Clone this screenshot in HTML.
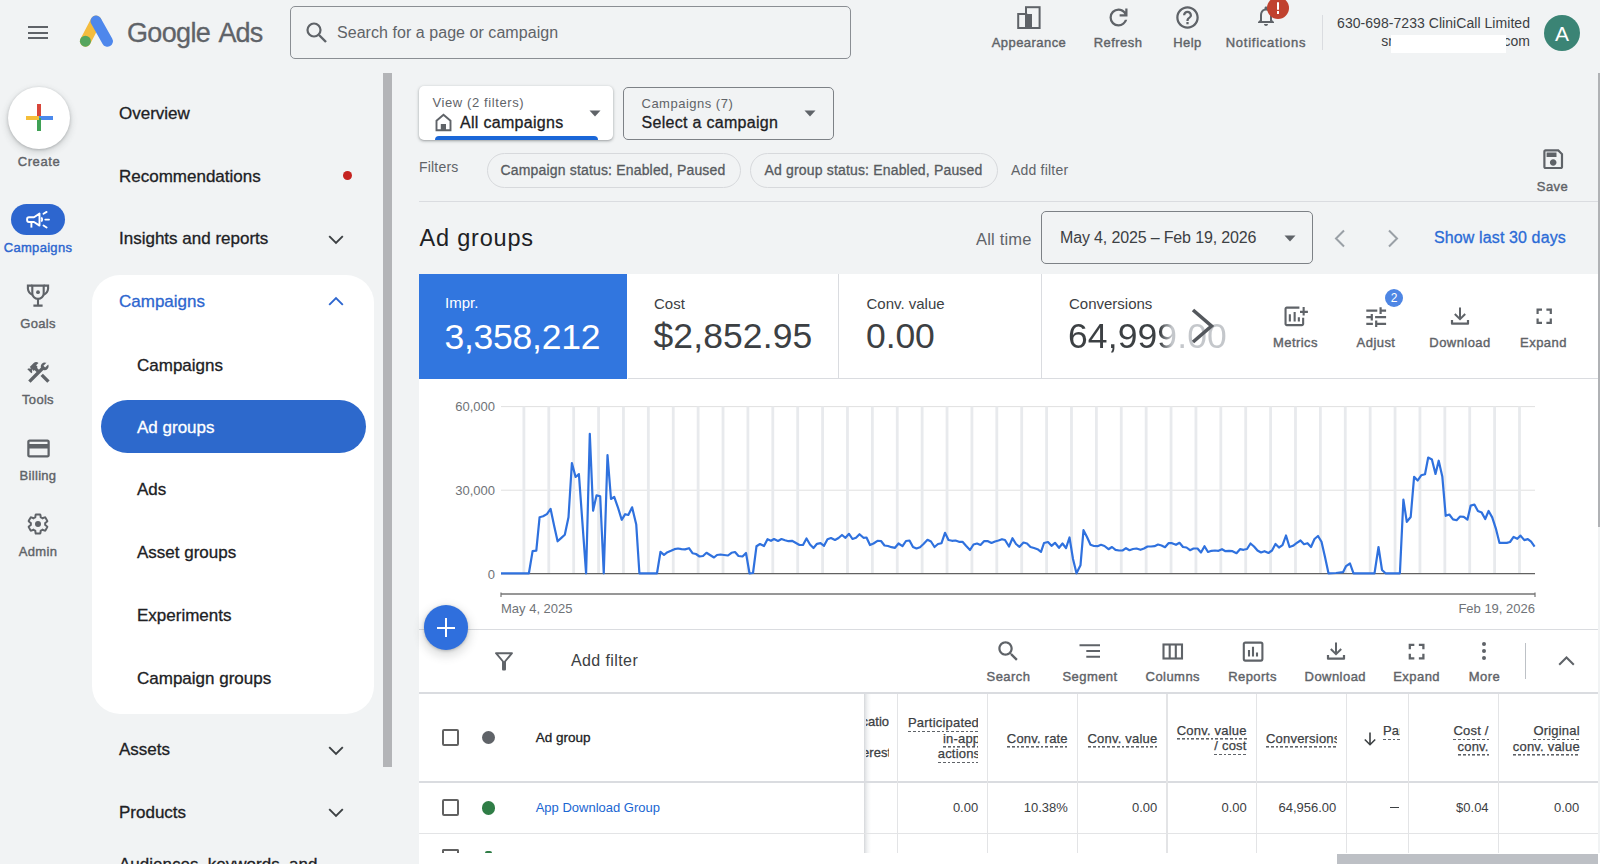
<!DOCTYPE html>
<html><head><meta charset="utf-8">
<style>
*{box-sizing:border-box;margin:0;padding:0}
html,body{width:1600px;height:864px;overflow:hidden;background:#f1f3f4;font-family:"Liberation Sans",sans-serif;color:#202124}
.a{position:absolute}
.t{position:absolute;white-space:nowrap;line-height:1}
svg{position:absolute;overflow:visible}
.lbl{position:absolute;white-space:nowrap;line-height:1;font-size:13px;color:#5f6368;text-align:center;transform:translateX(-50%);-webkit-text-stroke:0.4px #5f6368;letter-spacing:0.45px}
.med{-webkit-text-stroke:0.3px currentColor}
.nav{position:absolute;white-space:nowrap;line-height:1;font-size:16px;color:#202124;-webkit-text-stroke:0.3px currentColor;margin-top:0.8px}
.chev{position:absolute}
.ul{-webkit-text-stroke:0.25px currentColor;letter-spacing:0.2px;padding-bottom:3.2px;background:repeating-linear-gradient(to right,#5f6368 0 2.8px,transparent 2.8px 4.8px) left bottom/100% 1.6px no-repeat}
</style></head><body>

<!-- TOP BAR -->
<div class="a" style="left:28px;top:26px;width:20px;height:2px;background:#5f6368"></div>
<div class="a" style="left:28px;top:31.5px;width:20px;height:2px;background:#5f6368"></div>
<div class="a" style="left:28px;top:37px;width:20px;height:2px;background:#5f6368"></div>
<svg style="left:0;top:0" width="1" height="1">
  <line x1="96" y1="21" x2="85.4" y2="41.2" stroke="#f4bc3e" stroke-width="11" stroke-linecap="round"/>
  <line x1="96" y1="21" x2="107.4" y2="41.2" stroke="#4e87ec" stroke-width="11" stroke-linecap="round"/>
  <circle cx="85.4" cy="41.2" r="5.5" fill="#55a55e"/>
</svg>
<div class="t" style="left:127px;top:20px;font-size:27px;letter-spacing:-0.65px;color:#5f6368;-webkit-text-stroke:0.3px #5f6368">Google</div><div class="t" style="left:218.5px;top:20px;font-size:27px;letter-spacing:-0.9px;color:#5f6368;-webkit-text-stroke:0.3px #5f6368">Ads</div>

<div class="a" style="left:289.5px;top:5.6px;width:561px;height:53.4px;border:1.3px solid #8a8e93;border-radius:5px"></div>
<svg style="left:0;top:0" width="1" height="1">
  <circle cx="314" cy="30" r="6.5" fill="none" stroke="#5f6368" stroke-width="2.2"/>
  <line x1="319" y1="35" x2="326" y2="42" stroke="#5f6368" stroke-width="2.4"/>
</svg>
<div class="t" style="left:337px;top:25px;font-size:16px;letter-spacing:0.05px;color:#5f6368">Search for a page or campaign</div>


<!-- top right -->
<svg style="left:1017px;top:5.7px" width="24" height="24" viewBox="0 0 24 24">
  <rect x="1.2" y="8" width="8" height="14" fill="none" stroke="#5f6368" stroke-width="2"/>
  <rect x="9" y="1.2" width="13.6" height="20.8" fill="none" stroke="#5f6368" stroke-width="2"/>
  <rect x="8" y="8" width="7" height="14" fill="#5f6368"/>
</svg>
<div class="lbl" style="left:1029px;top:35.5px">Appearance</div>
<svg style="left:1104.5px;top:3.5px" width="27" height="27" viewBox="0 -960 960 960"><path fill="#5f6368" d="M480-160q-134 0-227-93t-93-227q0-134 93-227t227-93q69 0 132 28.5T720-690v-110h80v280H520v-80h168q-32-56-87.5-88T480-720q-100 0-170 70t-70 170q0 100 70 170t170 70q77 0 139-44t87-116h84q-28 106-114 173t-196 67Z"/></svg>
<div class="lbl" style="left:1118px;top:35.5px">Refresh</div>
<svg style="left:1174px;top:4px" width="27" height="27" viewBox="0 0 24 24"><path fill="#5f6368" d="M11 18h2v-2h-2v2zm1-16C6.48 2 2 6.48 2 12s4.48 10 10 10 10-4.48 10-10S17.52 2 12 2zm0 18c-4.41 0-8-3.59-8-8s3.59-8 8-8 8 3.59 8 8-3.59 8-8 8zm0-14c-2.21 0-4 1.79-4 4h2c0-1.1.9-2 2-2s2 .9 2 2c0 2-3 1.75-3 5h2c0-2.25 3-2.5 3-5 0-2.21-1.79-4-4-4z"/></svg>
<div class="lbl" style="left:1187.5px;top:35.5px">Help</div>
<svg style="left:1254px;top:4px" width="24" height="24" viewBox="0 0 24 24"><path fill="#5f6368" d="M12 22c1.1 0 2-.9 2-2h-4c0 1.1.9 2 2 2zm6-6v-5c0-3.07-1.64-5.64-4.5-6.32V4c0-.83-.67-1.5-1.5-1.5s-1.5.67-1.5 1.5v.68C7.630 5.36 6 7.92 6 11v5l-2 2v1h16v-1l-2-2zm-2 1H8v-6c0-2.48 1.51-4.5 4-4.5s4 2.02 4 4.5v6z"/></svg>
<div class="a" style="left:1267px;top:-3px;width:22px;height:22px;border-radius:50%;background:#c0422f"></div>
<div class="a" style="left:1276.5px;top:2px;width:2.6px;height:7.5px;background:#fff;border-radius:1px"></div>
<div class="a" style="left:1276.5px;top:11px;width:2.6px;height:2.6px;background:#fff"></div>
<div class="lbl" style="left:1266px;top:35.5px;letter-spacing:0.75px">Notifications</div>
<div class="a" style="left:1322px;top:15px;width:1px;height:35px;background:#dadce0"></div>
<div class="t" style="right:70px;top:16.2px;font-size:14px;letter-spacing:0.05px;color:#3c4043">630-698-7233 CliniCall Limited</div>
<div class="t" style="left:1381.2px;top:34px;font-size:14px;color:#3c4043">sm</div><div class="t" style="right:70px;top:34px;font-size:14px;color:#3c4043">.com</div>
<div class="a" style="left:1391px;top:35px;width:115px;height:17.5px;background:#fff"></div>
<div class="a" style="left:1544px;top:15px;width:36px;height:36px;border-radius:50%;background:#3b8475"></div>
<div class="t" style="left:1544px;top:23px;width:36px;text-align:center;font-size:21px;color:#fff">A</div>

<!-- LEFT RAIL -->
<div class="a" style="left:8px;top:86.5px;width:62px;height:62px;border-radius:50%;background:#fff;box-shadow:0 1px 3px rgba(60,64,67,.3),0 3px 6px 2px rgba(60,64,67,.12)"></div>
<div class="a" style="left:37px;top:104px;width:4px;height:14px;background:#d8463a"></div>
<div class="a" style="left:39px;top:116px;width:14px;height:4px;background:#4b89ec"></div>
<div class="a" style="left:37px;top:118px;width:4px;height:13px;background:#3fa155"></div>
<div class="a" style="left:26px;top:116px;width:13px;height:4px;background:#f5be39"></div>
<div class="lbl" style="left:39px;top:155px;font-size:13px;letter-spacing:0.6px">Create</div>

<div class="a" style="left:11px;top:204px;width:54px;height:31px;border-radius:16px;background:#2d66cf"></div>
<svg style="left:0;top:0" width="1" height="1"><g fill="none" stroke="#fff" stroke-width="1.9" stroke-linejoin="round">
<path d="M29 217.2H34L39.5 213.6V225.6L34 222H29A1.9 1.9 0 0 1 27.1 220.1V219.1A1.9 1.9 0 0 1 29 217.2Z"/>
<path d="M31.4 222.3V227.6"/>
<path d="M41.2 217.6A2.6 2.6 0 0 1 41.2 221.6" />
<path d="M43.5 213.8L46.6 211.9M45.3 219.6H49M43.5 225.5L46.6 227.5" stroke-linecap="round"/>
</g></svg>
<div class="lbl" style="left:38px;top:241px;font-size:13px;letter-spacing:0.3px;color:#2d66cf;-webkit-text-stroke:0.4px #2d66cf">Campaigns</div>

<svg style="left:0;top:0" width="1" height="1"><g fill="none" stroke="#5f6368" stroke-width="2.1">
<path d="M32.3 285.6H43.7V293.2A5.7 5.7 0 0 1 32.3 293.2Z"/>
<path d="M32.3 285.6H27.9V288.6Q28.3 293 32.5 294.8M43.7 285.6H48.1V288.6Q47.7 293 43.5 294.8"/>
<path d="M38 299V305.6M33.4 305.6H42.6"/>
</g><circle cx="38" cy="292.2" r="1.9" fill="#5f6368"/></svg>
<div class="lbl" style="left:38px;top:317px;font-size:13px;letter-spacing:0.3px">Goals</div>

<svg style="left:24.5px;top:358.5px" width="27" height="27" viewBox="0 0 24 24"><path fill="#5f6368" d="M13.783 15.172l2.121-2.121 5.996 5.996-2.121 2.121zM17.5 10c1.93 0 3.5-1.57 3.5-3.5 0-.58-.16-1.12-.41-1.6l-2.7 2.7-1.49-1.49 2.7-2.7c-.48-.25-1.02-.41-1.6-.41C15.57 3 14 4.57 14 6.5c0 .41.08.8.21 1.16l-1.85 1.85-1.78-1.78.71-.71-1.41-1.41L12 3.49c-1.17-1.17-3.07-1.17-4.24 0L4.22 7.03l1.41 1.41H2.81l-.71.71 3.54 3.54.71-.71V9.15l1.41 1.41.71-.71 1.78 1.78-7.41 7.41 2.12 2.12L16.34 9.79c.36.13.75.21 1.16.21z"/></svg>
<div class="lbl" style="left:38px;top:393px;font-size:13px;letter-spacing:0.3px">Tools</div>

<svg style="left:24.5px;top:435px" width="27" height="27" viewBox="0 0 24 24"><path fill="#5f6368" d="M20 4H4c-1.11 0-1.99.89-1.99 2L2 18c0 1.11.89 2 2 2h16c1.11 0 2-.89 2-2V6c0-1.11-.89-2-2-2zm0 14H4v-6h16v6zm0-10H4V6h16v2z"/></svg>
<div class="lbl" style="left:38px;top:469px;font-size:13px;letter-spacing:0.3px">Billing</div>

<svg style="left:26px;top:512px" width="24" height="24" viewBox="0 0 24 24"><path fill="none" stroke="#5f6368" stroke-width="2" d="M19.14 12.94c.04-.3.06-.61.06-.94 0-.32-.02-.64-.07-.94l2.03-1.58c.18-.14.23-.41.12-.61l-1.92-3.32c-.12-.22-.37-.29-.59-.22l-2.39.96c-.5-.38-1.03-.7-1.62-.94l-.36-2.54c-.04-.24-.24-.41-.48-.41h-3.84c-.24 0-.43.17-.47.41l-.36 2.54c-.59.24-1.13.57-1.62.94l-2.39-.96c-.22-.08-.47 0-.59.22L2.74 8.87c-.12.21-.08.47.12.61l2.03 1.58c-.05.3-.09.63-.09.94s.02.64.07.94l-2.03 1.58c-.18.14-.23.41-.12.61l1.92 3.32c.12.22.37.29.59.22l2.39-.96c.5.38 1.03.7 1.62.94l.36 2.54c.05.24.24.41.48.41h3.84c.24 0 .44-.17.47-.41l.36-2.54c.59-.24 1.13-.56 1.62-.94l2.39.96c.22.08.47 0 .59-.22l1.92-3.32c.12-.22.07-.47-.12-.61l-2.01-1.58z"/><circle cx="12" cy="12" r="3" fill="#5f6368"/></svg>
<div class="lbl" style="left:38px;top:545px;font-size:13px;letter-spacing:0.3px">Admin</div>


<!-- NAV PANEL -->
<div class="nav" style="left:119px;top:104.1px;font-size:17px">Overview</div>
<div class="nav" style="left:119px;top:167.4px;font-size:17px">Recommendations</div>
<div class="a" style="left:342.5px;top:171px;width:9px;height:9px;border-radius:50%;background:#c5221f"></div>
<div class="nav" style="left:119px;top:229.4px;font-size:17px">Insights and reports</div>
<svg style="left:328px;top:234.5px" width="16" height="10" viewBox="0 0 16 10"><path d="M1.2 1.2 L8 8 L14.8 1.2" fill="none" stroke="#3c4043" stroke-width="1.9"/></svg>
<div class="a" style="left:92px;top:274.5px;width:282px;height:439.5px;border-radius:28px;background:#fff"></div>
<div class="nav" style="left:119px;top:292.6px;font-size:17px;color:#2d66cf">Campaigns</div>
<svg style="left:328px;top:296px" width="16" height="10" viewBox="0 0 16 10"><path d="M1.2 8.8 L8 2 L14.8 8.8" fill="none" stroke="#2d66cf" stroke-width="1.9"/></svg>
<div class="nav" style="left:137px;top:355.8px;font-size:17px">Campaigns</div>
<div class="a" style="left:101px;top:400.3px;width:264.5px;height:53px;border-radius:27px;background:#2d69cc"></div>
<div class="nav" style="left:137px;top:418.0px;font-size:17px;color:#fff">Ad groups</div>
<div class="nav" style="left:137px;top:480.6px;font-size:17px">Ads</div>
<div class="nav" style="left:137px;top:543.4px;font-size:17px">Asset groups</div>
<div class="nav" style="left:137px;top:606.1px;font-size:17px">Experiments</div>
<div class="nav" style="left:137px;top:668.8px;font-size:17px">Campaign groups</div>
<div class="nav" style="left:119px;top:740.5px;font-size:17px">Assets</div>
<svg style="left:328px;top:745.5px" width="16" height="10" viewBox="0 0 16 10"><path d="M1.2 1.2 L8 8 L14.8 1.2" fill="none" stroke="#3c4043" stroke-width="1.9"/></svg>
<div class="nav" style="left:119px;top:803.1px;font-size:17px">Products</div>
<svg style="left:328px;top:808px" width="16" height="10" viewBox="0 0 16 10"><path d="M1.2 1.2 L8 8 L14.8 1.2" fill="none" stroke="#3c4043" stroke-width="1.9"/></svg>
<div class="nav" style="left:119px;top:855.1px;font-size:17px">Audiences, keywords, and</div>
<div class="a" style="left:382.8px;top:73px;width:9px;height:694px;background:#b3b4b7"></div>


<!-- MAIN TOP -->
<div class="a" style="left:419px;top:86.3px;width:194px;height:54px;border-radius:5px;background:#fff;box-shadow:0 1px 2px rgba(60,64,67,.3),0 1px 3px 1px rgba(60,64,67,.15);overflow:hidden">
  <div class="a" style="left:16px;top:49.3px;width:163px;height:6px;border-radius:4px 4px 0 0;background:#1a67d8"></div>
</div>
<div class="t" style="left:432.5px;top:95.7px;font-size:13px;letter-spacing:0.6px;color:#5f6368">View (2 filters)</div>
<svg style="left:434px;top:113px" width="19" height="19" viewBox="0 0 19 19"><path d="M2.5 17.2V7.8L9.5 1.8L16.5 7.8V17.2Z" fill="none" stroke="#5f6368" stroke-width="1.9" stroke-linejoin="miter"/><rect x="6.8" y="11" width="5.2" height="6.2" fill="#5f6368"/></svg>
<div class="t med" style="left:460px;top:115.4px;font-size:16px;letter-spacing:0.3px;color:#202124">All campaigns</div>
<svg style="left:589px;top:110px" width="12" height="7" viewBox="0 0 12 7"><path d="M0.5 0.5H11.5L6 6.5Z" fill="#5f6368"/></svg>

<div class="a" style="left:622.5px;top:86.5px;width:211px;height:53.5px;border-radius:5px;border:1.5px solid #7d8186"></div>
<div class="t" style="left:641.5px;top:97.2px;font-size:13px;letter-spacing:0.5px;color:#5f6368">Campaigns (7)</div>
<div class="t med" style="left:641.5px;top:115.4px;font-size:16px;letter-spacing:0.3px;color:#202124">Select a campaign</div>
<svg style="left:804px;top:110px" width="12" height="7" viewBox="0 0 12 7"><path d="M0.5 0.5H11.5L6 6.5Z" fill="#5f6368"/></svg>

<div class="t" style="left:419px;top:160.4px;font-size:14px;letter-spacing:0.2px;color:#5f6368">Filters</div>
<div class="a" style="left:486.5px;top:152.5px;width:254px;height:35.5px;border-radius:18px;border:1.3px solid #d7d9dc"></div>
<div class="t med" style="left:500.5px;top:163.45px;font-size:14px;letter-spacing:0.17px;color:#575b60">Campaign status: Enabled, Paused</div>
<div class="a" style="left:749.5px;top:152.5px;width:248px;height:35.5px;border-radius:18px;border:1.3px solid #d7d9dc"></div>
<div class="t med" style="left:764.5px;top:163.45px;font-size:14px;letter-spacing:0.17px;color:#575b60">Ad group status: Enabled, Paused</div>
<div class="t" style="left:1011px;top:163.45px;font-size:14px;letter-spacing:0.2px;color:#5f6368">Add filter</div>
<svg style="left:1539.6px;top:145.7px" width="26.4" height="26.4" viewBox="0 0 24 24"><path fill="#5f6368" d="M17 3H5c-1.11 0-2 .9-2 2v14c0 1.1.89 2 2 2h14c1.1 0 2-.9 2-2V7l-4-4zm2 16H5V5h11.17L19 7.830V19zm-7-7c-1.66 0-3 1.34-3 3s1.34 3 3 3 3-1.34 3-3-1.34-3-3-3zM6 6h9v4H6z"/></svg>
<div class="lbl" style="left:1552.5px;top:180px">Save</div>
<div class="a" style="left:419px;top:200.5px;width:1179px;height:1.5px;background:#dadce0"></div>

<div class="t" style="left:419.5px;top:227.4px;font-size:23.5px;letter-spacing:0.8px;color:#202124">Ad groups</div>
<div class="t" style="left:976px;top:230.5px;font-size:16.5px;letter-spacing:0.2px;color:#5f6368">All time</div>
<div class="a" style="left:1041px;top:211px;width:271.5px;height:53px;border-radius:5px;border:1.5px solid #7d8186"></div>
<div class="t" style="left:1060px;top:230.4px;font-size:16px;letter-spacing:-0.15px;color:#3c4043">May 4, 2025 – Feb 19, 2026</div>
<svg style="left:1283.5px;top:235px" width="12" height="7" viewBox="0 0 12 7"><path d="M0.5 0.5H11.5L6 6.5Z" fill="#5f6368"/></svg>
<svg style="left:1333px;top:229px" width="13" height="19" viewBox="0 0 13 19"><path d="M11 1.5L3 9.5L11 17.5" fill="none" stroke="#9aa0a6" stroke-width="2"/></svg>
<svg style="left:1387px;top:229px" width="13" height="19" viewBox="0 0 13 19"><path d="M2 1.5L10 9.5L2 17.5" fill="none" stroke="#9aa0a6" stroke-width="2"/></svg>
<div class="t med" style="left:1434px;top:230.3px;font-size:16px;letter-spacing:0.12px;color:#2b6bd6">Show last 30 days</div>


<!-- CARD -->
<div class="a" style="left:419px;top:274.3px;width:1179px;height:590px;background:#fff"></div>
<div class="a" style="left:419px;top:274.3px;width:207.7px;height:104.5px;background:#3176df"></div>
<div class="a" style="left:838.3px;top:274.3px;width:1px;height:104.5px;background:#dadce0"></div>
<div class="a" style="left:1041px;top:274.3px;width:1px;height:104.5px;background:#dadce0"></div>
<div class="a" style="left:627.5px;top:378.3px;width:970.5px;height:1px;background:#dadce0"></div>
<div class="t" style="left:445px;top:294.6px;font-size:15px;color:#fff">Impr.</div>
<div class="t" style="left:444.5px;top:319.55px;font-size:35.5px;letter-spacing:-0.25px;color:#fff">3,358,212</div>
<div class="t" style="left:654px;top:296.2px;font-size:15px;color:#3c4043">Cost</div>
<div class="t" style="left:653.5px;top:319.45px;font-size:35.5px;letter-spacing:0.1px;color:#3c4043">$2,852.95</div>
<div class="t" style="left:866.5px;top:296.2px;font-size:15px;color:#3c4043">Conv. value</div>
<div class="t" style="left:866px;top:319.45px;font-size:35.5px;letter-spacing:-0.1px;color:#3c4043">0.00</div>
<div class="t" style="left:1069px;top:296.2px;font-size:15px;color:#3c4043">Conversions</div>
<div class="t" style="left:1068px;top:319.45px;font-size:35.5px;letter-spacing:0.1px;color:transparent;background:linear-gradient(to right,#3c4043 0,#3c4043 92px,#c4c7cb 104px);-webkit-background-clip:text;background-clip:text;padding-bottom:6px">64,999.00</div>
<svg style="left:1188.5px;top:307px" width="30" height="40" viewBox="0 0 30 40"><path d="M4 3L22.5 19L4 35" fill="none" stroke="#54585d" stroke-width="3.6"/></svg>

<svg style="left:0;top:0" width="1" height="1"><g fill="none" stroke="#5f6368" stroke-width="2.1">
<path d="M1299.4 307.65H1286.8A1.2 1.2 0 0 0 1285.55 308.9V324A1.2 1.2 0 0 0 1286.8 325.15H1301.9A1.2 1.2 0 0 0 1303.15 324V317.7"/>
<path d="M1300 311.9H1307.9M1303.65 307.1V315.6"/>
<path d="M1289.85 314.2V321.4M1294.65 311.9V321.4M1298.85 317.2V321.4"/>
</g></svg>
<div class="lbl" style="left:1295.5px;top:336px">Metrics</div>
<svg style="left:1363px;top:303.7px" width="26.4" height="26.4" viewBox="0 0 24 24"><path fill="#5f6368" d="M3 17v2h6v-2H3zM3 5v2h10V5H3zm10 16v-2h8v-2h-8v-2h-2v6h2zM7 9v2H3v2h4v2h2V9H7zm14 4v-2H11v2h10zm-6-4h2V7h4V5h-4V3h-2v6z"/></svg>
<div class="a" style="left:1385px;top:288.5px;width:18px;height:18px;border-radius:50%;background:#4e86e4"></div>
<div class="t" style="left:1385px;top:291.5px;width:18px;text-align:center;font-size:12px;color:#fff">2</div>
<div class="lbl" style="left:1376px;top:336px">Adjust</div>
<svg style="left:1448px;top:304px" width="24" height="24" viewBox="0 0 24 24"><path d="M12 3.5V15M6.8 10L12 15.2L17.2 10" fill="none" stroke="#5f6368" stroke-width="2"/><path d="M4 16V19.7H20V16" fill="none" stroke="#5f6368" stroke-width="2.2" stroke-linejoin="round"/></svg>
<div class="lbl" style="left:1460px;top:336px">Download</div>
<svg style="left:1530.8px;top:303.4px" width="26.4" height="26.4" viewBox="0 0 24 24"><path fill="#5f6368" d="M7 14H5v5h5v-2H7v-3zm-2-4h2V7h3V5H5v5zm12 7h-3v2h5v-5h-2v3zM14 5v2h3v3h2V5h-5z"/></svg>
<div class="lbl" style="left:1543.5px;top:336px">Expand</div>

<!-- CHART -->
<svg style="left:0;top:0" width="1600" height="864" viewBox="0 0 1600 864">
  <line x1="501" y1="406.6" x2="1535" y2="406.6" stroke="#e0e0e0" stroke-width="1"/>
  <line x1="501" y1="490.2" x2="1535" y2="490.2" stroke="#e0e0e0" stroke-width="1"/>
  <rect x="522.50" y="406.6" width="2.8" height="166.7" fill="#e8eaed"/><rect x="547.39" y="406.6" width="2.8" height="166.7" fill="#e8eaed"/><rect x="572.28" y="406.6" width="2.8" height="166.7" fill="#e8eaed"/><rect x="597.17" y="406.6" width="2.8" height="166.7" fill="#e8eaed"/><rect x="622.06" y="406.6" width="2.8" height="166.7" fill="#e8eaed"/><rect x="646.95" y="406.6" width="2.8" height="166.7" fill="#e8eaed"/><rect x="671.84" y="406.6" width="2.8" height="166.7" fill="#e8eaed"/><rect x="696.73" y="406.6" width="2.8" height="166.7" fill="#e8eaed"/><rect x="721.62" y="406.6" width="2.8" height="166.7" fill="#e8eaed"/><rect x="746.51" y="406.6" width="2.8" height="166.7" fill="#e8eaed"/><rect x="771.40" y="406.6" width="2.8" height="166.7" fill="#e8eaed"/><rect x="796.29" y="406.6" width="2.8" height="166.7" fill="#e8eaed"/><rect x="821.18" y="406.6" width="2.8" height="166.7" fill="#e8eaed"/><rect x="846.07" y="406.6" width="2.8" height="166.7" fill="#e8eaed"/><rect x="870.96" y="406.6" width="2.8" height="166.7" fill="#e8eaed"/><rect x="895.85" y="406.6" width="2.8" height="166.7" fill="#e8eaed"/><rect x="920.74" y="406.6" width="2.8" height="166.7" fill="#e8eaed"/><rect x="945.63" y="406.6" width="2.8" height="166.7" fill="#e8eaed"/><rect x="970.52" y="406.6" width="2.8" height="166.7" fill="#e8eaed"/><rect x="995.41" y="406.6" width="2.8" height="166.7" fill="#e8eaed"/><rect x="1020.30" y="406.6" width="2.8" height="166.7" fill="#e8eaed"/><rect x="1045.19" y="406.6" width="2.8" height="166.7" fill="#e8eaed"/><rect x="1070.08" y="406.6" width="2.8" height="166.7" fill="#e8eaed"/><rect x="1094.97" y="406.6" width="2.8" height="166.7" fill="#e8eaed"/><rect x="1119.86" y="406.6" width="2.8" height="166.7" fill="#e8eaed"/><rect x="1144.75" y="406.6" width="2.8" height="166.7" fill="#e8eaed"/><rect x="1169.64" y="406.6" width="2.8" height="166.7" fill="#e8eaed"/><rect x="1194.53" y="406.6" width="2.8" height="166.7" fill="#e8eaed"/><rect x="1219.42" y="406.6" width="2.8" height="166.7" fill="#e8eaed"/><rect x="1244.31" y="406.6" width="2.8" height="166.7" fill="#e8eaed"/><rect x="1269.20" y="406.6" width="2.8" height="166.7" fill="#e8eaed"/><rect x="1294.09" y="406.6" width="2.8" height="166.7" fill="#e8eaed"/><rect x="1318.98" y="406.6" width="2.8" height="166.7" fill="#e8eaed"/><rect x="1343.87" y="406.6" width="2.8" height="166.7" fill="#e8eaed"/><rect x="1368.76" y="406.6" width="2.8" height="166.7" fill="#e8eaed"/><rect x="1393.65" y="406.6" width="2.8" height="166.7" fill="#e8eaed"/><rect x="1418.54" y="406.6" width="2.8" height="166.7" fill="#e8eaed"/><rect x="1443.43" y="406.6" width="2.8" height="166.7" fill="#e8eaed"/><rect x="1468.32" y="406.6" width="2.8" height="166.7" fill="#e8eaed"/><rect x="1493.21" y="406.6" width="2.8" height="166.7" fill="#e8eaed"/><rect x="1518.10" y="406.6" width="2.8" height="166.7" fill="#e8eaed"/>
  <line x1="501" y1="573.6" x2="1535" y2="573.6" stroke="#616161" stroke-width="1.2"/>
  <line x1="501" y1="594" x2="1535" y2="594" stroke="#757575" stroke-width="1.3"/>
  <line x1="501" y1="592.5" x2="501" y2="597" stroke="#757575" stroke-width="1.2"/>
  <line x1="1535" y1="592.5" x2="1535" y2="597" stroke="#757575" stroke-width="1.2"/>
  <polyline points="501,573.3 528.9,573.3 532.6,551.1 536.3,550.7 539.6,517.2 543.1,516.3 546.9,514.1 550.6,508.9 554.3,526.5 557.6,541.3 561.1,538.1 564.8,534.8 568.5,517.2 571.9,463 575.6,477 578.9,474.1 586.1,573.3 589.8,433.9 593.1,510.7 596.5,495.4 600.2,496.25 603.75,573.3 607.5,455.2 611,499 614.2,496.9 617.9,507.3 621.7,519.8 625.2,514.2 628.3,515 632.1,507.3 636.25,524.6 639.4,573.3 657,573.3 660.5,551.8 664,554.8 667.5,552.2 671,550.8 674.5,549.2 678,548.5 681.5,549.2 685,549.4 689,548.2 692.5,553.2 696,554 699.5,556.5 703,556 706.5,552.8 710,555 714,557.5 717,555 720.5,554.5 724,555 728,555.5 731.5,552.8 735,552 738.5,556 742.5,556.5 746,553 749.5,573.3 753,573 756.5,546.2 760,544 764,546 767.5,539.2 771,540.8 774,539 778,541 781.5,539 785,540.2 788.5,541.2 792,540.8 796,543 799.5,545 803,545 806.5,538.5 810,544.5 813.5,548 817,543.8 820.5,543.2 824,545.8 827.5,539.2 831,538 835,540 838.5,538 842,535 845.5,537.8 849,533.8 852.5,539 856,537.8 859.5,534.2 863.5,537.8 866.5,537.5 870,545 873.5,543.5 877.5,540.8 881,541 884.5,545.5 888,546 891.5,547.2 895,547.8 898.5,543.5 902.5,546.2 906,541 909.5,540.5 913,547 916.5,548.5 920,547.2 923.5,544 927.5,539.8 931,541.5 934.5,547 938,544 941.5,543.2 945,532.8 948.5,540 952,540.8 955.5,540.5 959,541.8 962.5,541.8 966,545.8 970,550 973.5,544.5 977,543.5 980.5,545 984,541.2 988,541.2 991.5,543 995,541.5 998.5,540.5 1002,539.2 1005,540 1009,546.5 1012.5,538.2 1016,544 1019.5,546.8 1023.5,542.5 1027,543.5 1030.5,547 1034,548 1037.5,549.2 1041,551.8 1044,543 1048,542 1051.5,545.8 1055,542.8 1059,547.8 1062.5,543.5 1066,548.2 1069.5,537.5 1073,559 1076.5,573.3 1080.5,565.2 1083.5,530.2 1087,537 1090.5,544.8 1094,546 1097.5,546.2 1101,544.8 1104.5,546 1108.5,549.2 1112,547 1115.5,549.8 1119,550.5 1122.5,550.5 1126,548.2 1129.5,550.2 1133,549 1136.5,548.5 1140.5,549.8 1144,548.5 1147.5,546.5 1151,546.5 1154.5,546.2 1158,544.5 1161.5,545.5 1165,547.2 1168.5,543.2 1172,543.2 1176,544.8 1179.5,542.8 1183,547 1186.5,547.5 1190,550.2 1193.5,548.5 1197.5,548.5 1201,552.5 1204.5,546.2 1208,552 1211.5,550.8 1215,550.5 1218.5,550.8 1222,549.2 1225.5,551.2 1229,550.8 1232.5,551.2 1236.5,553.2 1240,549.2 1243.5,549.8 1247,549 1250.5,543.5 1254,546.5 1257.5,550.5 1261,552.5 1264.5,551.2 1268.5,553 1272,550.5 1275.5,544 1279,547.5 1282.5,545.2 1286,535.5 1289.5,547 1293,545.8 1296.5,543.2 1300.5,540.5 1304,544.2 1307.5,543.2 1311,547 1314.5,539 1318,536 1321.5,541.8 1325,557 1328.5,573.3 1336,573 1343,572.2 1346,566.2 1350,563.5 1353.5,573.3 1374.5,573.3 1378.5,547 1382,570 1385.5,573.3 1399.9,573.3 1403.4,499.6 1406.8,521.8 1410.7,517 1414.1,476.9 1417.7,480.5 1421.2,475.3 1425,474.3 1428.2,457.5 1431.9,459.4 1435.5,474 1438.7,460.7 1442.3,476.4 1445.7,515.8 1449.3,514.5 1453,519.4 1456.6,520.2 1460.1,516.5 1463.8,516.9 1467.4,519.7 1470.7,505.6 1474.4,504.5 1477.9,511 1481.7,512.6 1485.2,519 1488.6,511 1492.2,517.4 1495.8,528.3 1499.5,542.9 1506.8,542.9 1510,542 1513.6,536.9 1517.3,538.8 1520.5,535.6 1524.3,540.1 1527.8,539.1 1531.1,541.7 1534.6,546.6" fill="none" stroke="#2f71de" stroke-width="2.2" stroke-linejoin="round"/>
</svg>
<div class="t" style="right:1105px;top:400.0px;font-size:13px;color:#6f7377">60,000</div>
<div class="t" style="right:1105px;top:484.1px;font-size:13px;color:#6f7377">30,000</div>
<div class="t" style="right:1105px;top:567.5px;font-size:13px;color:#6f7377">0</div>
<div class="t" style="left:501px;top:602.1px;font-size:13px;color:#6f7377">May 4, 2025</div>
<div class="t" style="right:65px;top:602.1px;font-size:13px;color:#6f7377">Feb 19, 2026</div>
<div class="a" style="left:419px;top:628.5px;width:1179px;height:1px;background:#dadce0"></div>
<div class="a" style="left:423.8px;top:605.2px;width:44.5px;height:44.5px;border-radius:50%;background:#2f6fdd;box-shadow:0 1px 3px rgba(60,64,67,.3),0 4px 8px 3px rgba(60,64,67,.15)"></div>
<div class="a" style="left:437px;top:626.5px;width:18.3px;height:2px;background:#fff"></div>
<div class="a" style="left:445.2px;top:618.3px;width:2px;height:18.3px;background:#fff"></div>


<!-- TABLE TOOLBAR -->
<svg style="left:494px;top:651px" width="20" height="20" viewBox="0 0 20 20"><path d="M2 2.2H18L11 10.5V18.5H9V10.5Z" fill="none" stroke="#5f6368" stroke-width="1.9" stroke-linejoin="round"/><rect x="8.6" y="10.5" width="2.8" height="8" rx="1" fill="#5f6368"/></svg>
<div class="t" style="left:571px;top:653.06px;font-size:16px;letter-spacing:0.4px;color:#3c4043">Add filter</div>

<svg style="left:995.1px;top:638.3px" width="26.6" height="26.6" viewBox="0 0 24 24"><path fill="#5f6368" d="M15.5 14h-.79l-.28-.27C15.41 12.59 16 11.11 16 9.5 16 5.910 13.09 3 9.5 3S3 5.91 3 9.5 5.91 16 9.5 16c1.61 0 3.09-.59 4.23-1.57l.27.28v.79l5 4.99L20.49 19l-4.99-5zm-6 0C7.01 14 5 11.99 5 9.5S7.01 5 9.5 5 14 7.01 14 9.5 11.99 14 9.5 14z"/></svg>
<div class="lbl" style="left:1008.5px;top:670px">Search</div>
<svg style="left:1079px;top:644px" width="22" height="14" viewBox="0 0 22 14"><path d="M0.5 1.2H21M7.3 7H21M7.3 12.8H21" stroke="#5f6368" stroke-width="2.1"/></svg>
<div class="lbl" style="left:1090px;top:670px">Segment</div>
<svg style="left:1162px;top:642.5px" width="22" height="17" viewBox="0 0 22 17"><rect x="1.5" y="1.5" width="18.5" height="14" fill="none" stroke="#5f6368" stroke-width="2.1"/><path d="M7.7 1.5V15.5M13.8 1.5V15.5" stroke="#5f6368" stroke-width="2.1"/></svg>
<div class="lbl" style="left:1172.8px;top:670px">Columns</div>
<svg style="left:1241.5px;top:640.5px" width="22" height="21" viewBox="0 0 22 21"><rect x="1.8" y="1.6" width="18.6" height="18" rx="1.5" fill="none" stroke="#5f6368" stroke-width="2.1"/><path d="M7 9V15.5M11 5.8V15.5M15 11.5V15.5" stroke="#5f6368" stroke-width="2.1"/></svg>
<div class="lbl" style="left:1252.5px;top:670px">Reports</div>
<svg style="left:1323.5px;top:639px" width="24" height="24" viewBox="0 0 24 24"><path d="M12 3.5V15M6.8 10L12 15.2L17.2 10" fill="none" stroke="#5f6368" stroke-width="2"/><path d="M4 16V19.7H20V16" fill="none" stroke="#5f6368" stroke-width="2.2" stroke-linejoin="round"/></svg>
<div class="lbl" style="left:1335.3px;top:670px">Download</div>
<svg style="left:1403.2px;top:637.8px" width="27.2" height="27.2" viewBox="0 0 24 24"><path fill="#5f6368" d="M7 14H5v5h5v-2H7v-3zm-2-4h2V7h3V5H5v5zm12 7h-3v2h5v-5h-2v3zM14 5v2h3v3h2V5h-5z"/></svg>
<div class="lbl" style="left:1416.6px;top:670px">Expand</div>
<div class="a" style="left:1482.2px;top:642px;width:4.2px;height:4.2px;border-radius:50%;background:#5f6368"></div>
<div class="a" style="left:1482.2px;top:648.8px;width:4.2px;height:4.2px;border-radius:50%;background:#5f6368"></div>
<div class="a" style="left:1482.2px;top:655.6px;width:4.2px;height:4.2px;border-radius:50%;background:#5f6368"></div>
<div class="lbl" style="left:1484.4px;top:670px">More</div>
<div class="a" style="left:1525px;top:643px;width:1.2px;height:36px;background:#bdc1c6"></div>
<svg style="left:1558px;top:655px" width="17" height="11" viewBox="0 0 17 11"><path d="M1.2 9.8L8.5 2.5L15.8 9.8" fill="none" stroke="#5f6368" stroke-width="2"/></svg>
<div class="a" style="left:419px;top:692.3px;width:1179px;height:1.5px;background:#dadce0"></div>

<!-- TABLE -->
<div class="a" style="left:419px;top:781px;width:1179px;height:1.6px;background:#dadce0"></div>
<div class="a" style="left:419px;top:832.5px;width:1179px;height:1.3px;background:#e3e4e6"></div>
<div class="a" style="left:897.1px;top:693.5px;width:1.3px;height:159px;background:#e3e4e6"></div>
<div class="a" style="left:986.9px;top:693.5px;width:1.3px;height:159px;background:#e3e4e6"></div>
<div class="a" style="left:1076.9px;top:693.5px;width:1.3px;height:159px;background:#e3e4e6"></div>
<div class="a" style="left:1166.4px;top:693.5px;width:1.3px;height:159px;background:#e3e4e6"></div>
<div class="a" style="left:1255.9px;top:693.5px;width:1.3px;height:159px;background:#e3e4e6"></div>
<div class="a" style="left:1345.7px;top:693.5px;width:1.3px;height:159px;background:#e3e4e6"></div>
<div class="a" style="left:1408.1000000000001px;top:693.5px;width:1.3px;height:159px;background:#e3e4e6"></div>
<div class="a" style="left:1497.7px;top:693.5px;width:1.3px;height:159px;background:#e3e4e6"></div>
<div class="a" style="left:863.5px;top:693.5px;width:7px;height:159px;background:linear-gradient(to right,#d5d7da 0,#e6e8ea 25%,#f4f5f6 55%,rgba(255,255,255,0))"></div>
<div class="a" style="left:863.5px;top:781px;width:8px;height:1.6px;background:#dadce0"></div><div class="a" style="left:863.5px;top:832.5px;width:8px;height:1.3px;background:#e3e4e6"></div>

<div class="a" style="left:866px;top:693.5px;width:23px;height:88px;overflow:hidden">
  <div class="t med" style="right:0px;top:21.3px;font-size:13px;color:#3c4043">Locatio</div>
  <div class="t med" style="right:-2px;top:52.8px;font-size:13px;color:#3c4043">interest</div>
</div>
<div class="a" style="left:905px;top:693.5px;width:73.3px;height:88px;overflow:hidden">
  <div class="t ul" style="left:3px;top:22.5px;font-size:13px;color:#3c4043">Participated</div>
  <div class="t ul" style="right:-2px;top:38.200000000000045px;font-size:13px;color:#3c4043">in-app</div>
  <div class="t ul" style="right:-2px;top:53.799999999999955px;font-size:13px;color:#3c4043">actions</div>
</div>
<div class="t ul" style="right:532.2px;top:731.5px;font-size:13px;color:#3c4043">Conv. rate</div>
<div class="t ul" style="right:442.5999999999999px;top:731.5px;font-size:13px;color:#3c4043">Conv. value</div>
<div class="t ul" style="right:353.4000000000001px;top:723.7px;font-size:13px;color:#3c4043">Conv. value</div>
<div class="t ul" style="right:353.4000000000001px;top:739.3px;font-size:13px;color:#3c4043">/ cost</div>
<div class="a" style="left:1264px;top:693.5px;width:72.8px;height:88px;overflow:hidden">
  <div class="t ul" style="left:2px;top:38.39999999999998px;font-size:13px;color:#3c4043">Conversions</div>
</div>
<svg style="left:1362px;top:731px" width="16" height="16" viewBox="0 0 16 16"><path d="M8 1.5V13.5M2.8 8.5L8 13.7L13.2 8.5" fill="none" stroke="#3c4043" stroke-width="1.6"/></svg>
<div class="a" style="left:1382.5px;top:693.5px;width:17.5px;height:88px;overflow:hidden">
  <div class="t ul" style="left:0.5px;top:30.5px;font-size:13px;color:#3c4043">Participated</div>
</div>
<div class="t ul" style="right:111.40000000000009px;top:724.0px;font-size:13px;color:#3c4043">Cost /</div>
<div class="t ul" style="right:111.40000000000009px;top:739.75px;font-size:13px;color:#3c4043">conv.</div>
<div class="t ul" style="right:20.200000000000045px;top:724.0px;font-size:13px;color:#3c4043">Original</div>
<div class="t ul" style="right:20.200000000000045px;top:739.75px;font-size:13px;color:#3c4043">conv. value</div>

<div class="a" style="left:441.8px;top:728.7px;width:17.5px;height:17.3px;border:2px solid #616161;border-radius:2px"></div>
<div class="a" style="left:481.7px;top:730.8px;width:13.7px;height:13.7px;border-radius:50%;background:#5f6368"></div>
<div class="t med" style="left:535.7px;top:730.77px;font-size:13.5px;color:#202124">Ad group</div>

<div class="a" style="left:441.8px;top:799px;width:17.5px;height:17.3px;border:2px solid #616161;border-radius:2px"></div>
<div class="a" style="left:481.7px;top:801.2px;width:13.7px;height:13.7px;border-radius:50%;background:#2f7d46"></div>
<div class="t" style="left:535.7px;top:801.0px;font-size:13px;color:#1a66d2">App Download Group</div>
<div class="t" style="right:621.8px;top:801.3px;font-size:13px;color:#3c4043">0.00</div>
<div class="t" style="right:532.2px;top:801.3px;font-size:13px;color:#3c4043">10.38%</div>
<div class="t" style="right:442.70000000000005px;top:801.3px;font-size:13px;color:#3c4043">0.00</div>
<div class="t" style="right:353.20000000000005px;top:801.3px;font-size:13px;color:#3c4043">0.00</div>
<div class="t" style="right:263.70000000000005px;top:801.3px;font-size:13px;color:#3c4043">64,956.00</div>
<div class="t" style="right:111.40000000000009px;top:801.3px;font-size:13px;color:#3c4043">$0.04</div>
<div class="t" style="right:20.700000000000045px;top:801.3px;font-size:13px;color:#3c4043">0.00</div>
<div class="a" style="left:1389.5px;top:806.5px;width:9px;height:1.2px;background:#3c4043"></div>

<div class="a" style="left:419px;top:852.8px;width:1181px;height:12px;background:#fff"></div>
<div class="a" style="left:419px;top:852.8px;width:1181px;height:12px;background:#fff"></div><div class="a" style="left:485px;top:850.5px;width:7px;height:2.3px;border-radius:4px 4px 0 0;background:#2f7d46"></div>
<div class="a" style="left:441.8px;top:849px;width:17.5px;height:3.8px;border:2px solid #616161;border-bottom:none;border-radius:2px 2px 0 0"></div>
<div class="a" style="left:1337px;top:853.6px;width:261px;height:11px;background:#bdc0c5"></div>
<div class="a" style="left:1597.5px;top:72.8px;width:2.5px;height:454.5px;background:#b0b2b5"></div>

</body></html>
